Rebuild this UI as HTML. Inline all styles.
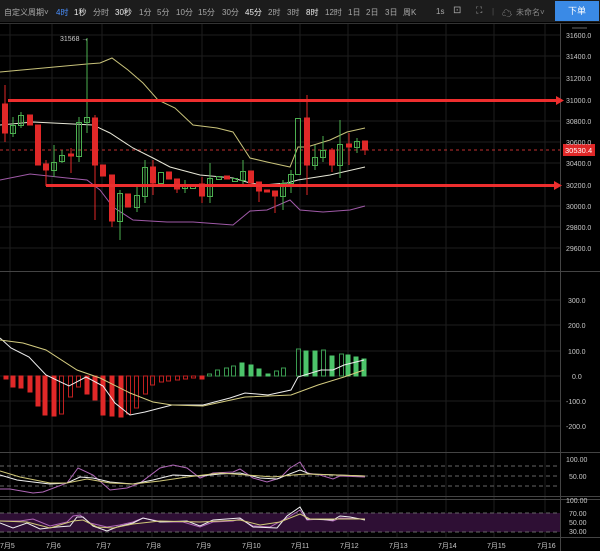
<!DOCTYPE html>
<html><head><meta charset="utf-8"><style>
html,body{margin:0;padding:0;background:#000;}
body{width:600px;height:551px;overflow:hidden;position:relative;font-family:"Liberation Sans","Noto Sans CJK SC",sans-serif;}
.tb{position:absolute;left:0;top:0;width:600px;height:22px;background:#1c1c1c;color:#a8a8a8;font-size:8px;}
.tb span{position:absolute;top:7px;white-space:nowrap;}
.btn{position:absolute;left:555px;top:1px;width:44px;height:20px;background:#3a8ae6;color:#fff;font-size:9px;text-align:center;line-height:20px;}
svg{position:absolute;left:0;top:0;}
</style></head><body>
<div class="tb">
<span style="left:4px">自定义周期˅</span>
<span style="left:56px;color:#4a90ff">4时</span>
<span style="left:74px;color:#eee">1秒</span>
<span style="left:93px">分时</span>
<span style="left:115px;color:#eee">30秒</span>
<span style="left:139px">1分</span>
<span style="left:157px">5分</span>
<span style="left:176px">10分</span>
<span style="left:198px">15分</span>
<span style="left:222px">30分</span>
<span style="left:245px;color:#eee">45分</span>
<span style="left:268px">2时</span>
<span style="left:287px">3时</span>
<span style="left:306px;color:#eee">8时</span>
<span style="left:325px">12时</span>
<span style="left:348px">1日</span>
<span style="left:366px">2日</span>
<span style="left:385px">3日</span>
<span style="left:403px">周K</span>
<span style="left:436px">1s</span>
<span style="left:453px;top:5px;font-size:10px">⊡</span>
<span style="left:476px;top:5px;font-size:9px">⛶</span>
<span style="left:492px;color:#555">|</span>
<span style="left:502px;top:5px;font-size:10px">☁</span>
<span style="left:516px;color:#888">未命名˅</span>
<div class="btn">下单</div>
</div>
<svg width="600" height="551" viewBox="0 0 600 551">
<g stroke="#1e1e1e" stroke-width="1">
<line x1="10" y1="24" x2="10" y2="537"/><line x1="52" y1="24" x2="52" y2="537"/><line x1="102" y1="24" x2="102" y2="537"/><line x1="152" y1="24" x2="152" y2="537"/><line x1="202" y1="24" x2="202" y2="537"/><line x1="251" y1="24" x2="251" y2="537"/><line x1="300" y1="24" x2="300" y2="537"/><line x1="348" y1="24" x2="348" y2="537"/><line x1="397" y1="24" x2="397" y2="537"/><line x1="446" y1="24" x2="446" y2="537"/><line x1="494" y1="24" x2="494" y2="537"/><line x1="545" y1="24" x2="545" y2="537"/>
<line x1="0" y1="35" x2="560" y2="35"/><line x1="0" y1="56" x2="560" y2="56"/><line x1="0" y1="78" x2="560" y2="78"/><line x1="0" y1="121" x2="560" y2="121"/><line x1="0" y1="142" x2="560" y2="142"/><line x1="0" y1="163" x2="560" y2="163"/><line x1="0" y1="206" x2="560" y2="206"/><line x1="0" y1="227" x2="560" y2="227"/><line x1="0" y1="248" x2="560" y2="248"/>
<line x1="0" y1="300" x2="560" y2="300"/><line x1="0" y1="325" x2="560" y2="325"/><line x1="0" y1="351" x2="560" y2="351"/><line x1="0" y1="376" x2="560" y2="376"/><line x1="0" y1="401" x2="560" y2="401"/><line x1="0" y1="426" x2="560" y2="426"/>
</g>
<g stroke="#444" stroke-width="1">
<line x1="0" y1="23.5" x2="600" y2="23.5" stroke="#333"/>
<line x1="560.5" y1="23" x2="560.5" y2="551"/>
<line x1="0" y1="271.5" x2="600" y2="271.5"/>
<line x1="0" y1="452.5" x2="600" y2="452.5"/>
<line x1="0" y1="496.5" x2="600" y2="496.5"/>
<line x1="0" y1="499.5" x2="600" y2="499.5"/>
<line x1="0" y1="537.5" x2="600" y2="537.5"/>
</g>
<rect x="0" y="513" width="560" height="19" fill="#2e0f34"/>
<g stroke="#666" stroke-dasharray="4,3" stroke-width="1">
<line x1="0" y1="466" x2="560" y2="466"/><line x1="0" y1="476" x2="560" y2="476"/><line x1="0" y1="486" x2="560" y2="486"/>
<line x1="0" y1="513" x2="560" y2="513"/><line x1="0" y1="532" x2="560" y2="532"/>
</g>
<line x1="0" y1="150" x2="560" y2="150" stroke="#c03030" stroke-dasharray="3,3"/>
<g fill="none" stroke-width="1">
<polyline stroke="#c8c27a" points="0,72 87,64 100,63 112,58 128,70 143,83 158,100 175,108 193,125 217,128 233,132 250,158 267,162 290,167 298,147 307,147 330,140 347,132 365,128"/>
<polyline stroke="#e8e8d8" points="0,125 33,122 93,125 110,133 133,148 153,158 170,167 200,175 233,178 250,183 263,185 287,183 298,180 330,175 365,167"/>
<polyline stroke="#a05aa8" points="0,180 30,174 67,178 87,180 100,190 113,207 133,220 167,222 193,222 233,225 250,211 267,210 290,200 300,210 323,212 350,210 365,206"/>
</g>
<g stroke="#e02828" fill="#e02828">
<line x1="5" y1="85" x2="5" y2="142"/><rect x="2.5" y="104" width="5" height="29"/>
<rect x="27.5" y="115" width="5" height="10"/>
<rect x="35.5" y="125" width="5" height="40"/>
<line x1="46" y1="160" x2="46" y2="186"/><rect x="43.5" y="164" width="5" height="6"/>
<line x1="71" y1="148" x2="71" y2="173"/><rect x="68.5" y="154" width="5" height="2"/>
<line x1="95" y1="115" x2="95" y2="220"/><rect x="92.5" y="118" width="5" height="47"/>
<rect x="100.5" y="165" width="5" height="11"/>
<line x1="112" y1="175" x2="112" y2="227"/><rect x="109.5" y="175" width="5" height="46"/>
<rect x="125.5" y="194" width="5" height="13"/>
<line x1="153" y1="160" x2="153" y2="195"/><rect x="150.5" y="167" width="5" height="16"/>
<rect x="166.5" y="172" width="5" height="7"/>
<line x1="177" y1="179" x2="177" y2="193"/><rect x="174.5" y="179" width="5" height="10"/>
<line x1="202" y1="177" x2="202" y2="203"/><rect x="199.5" y="184" width="5" height="12"/>
<rect x="224.5" y="176" width="5" height="3"/>
<rect x="248.5" y="171" width="5" height="12"/>
<line x1="259" y1="182" x2="259" y2="202"/><rect x="256.5" y="182" width="5" height="9"/>
<rect x="264.5" y="190" width="5" height="2"/>
<line x1="275" y1="191" x2="275" y2="213"/><rect x="272.5" y="191" width="5" height="5"/>
<line x1="307" y1="95" x2="307" y2="195"/><rect x="304.5" y="118" width="5" height="47"/>
<line x1="332" y1="148" x2="332" y2="172"/><rect x="329.5" y="150" width="5" height="15"/>
<line x1="349" y1="133" x2="349" y2="165"/><rect x="346.5" y="144" width="5" height="3"/>
<line x1="365" y1="141" x2="365" y2="155"/><rect x="362.5" y="141" width="5" height="9"/>
</g>
<g stroke="#4caf50" fill="none">
<line x1="13" y1="117" x2="13" y2="137"/><rect x="10.5" y="125.5" width="5" height="8"/>
<line x1="21" y1="112" x2="21" y2="128"/><rect x="18.5" y="115.5" width="5" height="10"/>
<line x1="54" y1="145" x2="54" y2="177"/><rect x="51.5" y="162.5" width="5" height="8"/>
<line x1="62" y1="150" x2="62" y2="163"/><rect x="59.5" y="155.5" width="5" height="6"/>
<line x1="79" y1="117" x2="79" y2="162"/><rect x="76.5" y="122.5" width="5" height="34"/>
<line x1="87" y1="38" x2="87" y2="133"/><rect x="84.5" y="117.5" width="5" height="5"/>
<line x1="120" y1="190" x2="120" y2="240"/><rect x="117.5" y="193.5" width="5" height="28"/>
<line x1="137" y1="185" x2="137" y2="212"/><rect x="134.5" y="195.5" width="5" height="12"/>
<line x1="145" y1="160" x2="145" y2="203"/><rect x="142.5" y="167.5" width="5" height="29"/>
<rect x="158.5" y="172.5" width="5" height="11"/>
<line x1="185" y1="180" x2="185" y2="193"/><rect x="182.5" y="186.5" width="5" height="2"/>
<rect x="190.5" y="186.5" width="5" height="2"/>
<line x1="210" y1="163" x2="210" y2="203"/><rect x="207.5" y="178.5" width="5" height="18"/>
<rect x="216.5" y="176.5" width="5" height="3"/>
<rect x="232.5" y="178.5" width="5" height="3"/>
<line x1="243" y1="160" x2="243" y2="187"/><rect x="240.5" y="171.5" width="5" height="9"/>
<line x1="283" y1="180" x2="283" y2="210"/><rect x="280.5" y="183.5" width="5" height="13"/>
<line x1="291" y1="170" x2="291" y2="193"/><rect x="288.5" y="174.5" width="5" height="9"/>
<rect x="295.5" y="118.5" width="5" height="56"/>
<line x1="315" y1="145" x2="315" y2="170"/><rect x="312.5" y="157.5" width="5" height="8"/>
<line x1="323" y1="136" x2="323" y2="162"/><rect x="320.5" y="150.5" width="5" height="7"/>
<line x1="340" y1="120" x2="340" y2="178"/><rect x="337.5" y="144.5" width="5" height="21"/>
<line x1="357" y1="138" x2="357" y2="153"/><rect x="354.5" y="141.5" width="5" height="6"/>
</g>
<text x="60" y="41" fill="#ccc" font-size="7">31568 →</text>
<g fill="#ee2e2e">
<rect x="8" y="99" width="548" height="3"/><polygon points="556,96 564,100.5 556,105"/>
<rect x="46" y="184" width="508" height="3"/><polygon points="554,181 562,185.5 554,190"/>
</g>
<rect x="563" y="144" width="32" height="12" fill="#e02828"/>
<text x="565" y="153" fill="#fff" font-size="7.5">30530.4</text>
<g fill="#e02828" stroke="#e02828">
<rect x="4" y="376" width="4" height="3"/><rect x="11" y="376" width="4" height="11"/><rect x="19" y="376" width="4" height="12"/><rect x="28" y="376" width="4" height="16"/><rect x="36" y="376" width="4" height="30"/><rect x="43" y="376" width="4" height="39"/><rect x="52" y="376" width="4" height="40"/>
<rect x="85" y="376" width="4" height="18"/><rect x="93" y="376" width="4" height="24"/><rect x="101" y="376" width="4" height="39"/><rect x="110" y="376" width="4" height="40"/><rect x="119" y="376" width="4" height="41"/><rect x="200" y="376" width="4" height="3"/>
</g>
<g fill="none" stroke="#c02020">
<rect x="59.5" y="376" width="4" height="38"/><rect x="68.5" y="376" width="4" height="21"/><rect x="76.5" y="376" width="4" height="11"/>
<rect x="126.5" y="376" width="4" height="38"/><rect x="134.5" y="376" width="4" height="32"/><rect x="143.5" y="376" width="4" height="18"/><rect x="150.5" y="376" width="4" height="9"/><rect x="159.5" y="376" width="4" height="6"/><rect x="166.5" y="376" width="4" height="5"/><rect x="175.5" y="376" width="4" height="4"/><rect x="183.5" y="376" width="4" height="3"/><rect x="191.5" y="376" width="4" height="2"/>
</g>
<g fill="#4cc46a" stroke="#4cc46a">
<rect x="240" y="363" width="4" height="13"/><rect x="249" y="365" width="4" height="11"/><rect x="257" y="369" width="4" height="7"/><rect x="266" y="374" width="4" height="2"/>
<rect x="304" y="351" width="4" height="25"/><rect x="313" y="351" width="4" height="25"/><rect x="330" y="356" width="4" height="20"/><rect x="346" y="355" width="4" height="21"/><rect x="354" y="357" width="4" height="19"/><rect x="362" y="359" width="4" height="17"/>
</g>
<g fill="none" stroke="#3a9a50">
<rect x="207.5" y="374" width="4" height="2"/><rect x="215.5" y="370" width="4" height="6"/><rect x="224.5" y="368" width="4" height="8"/><rect x="231.5" y="366" width="4" height="10"/>
<rect x="274.5" y="371" width="4" height="5"/><rect x="281.5" y="368" width="4" height="8"/><rect x="296.5" y="349" width="4" height="27"/><rect x="321.5" y="350" width="4" height="26"/><rect x="339.5" y="354" width="4" height="22"/>
</g>
<g fill="none" stroke-width="1">
<polyline stroke="#eee" points="0,338 11,348 29,357 46,375 69,386 86,377 103,386 115,403 130,415 145,412 172,405 203,405 230,398 245,393 268,395 291,390 298,377 321,370 333,370 344,365 364,360"/>
<polyline stroke="#d4cc80" points="0,340 23,343 46,350 77,370 100,378 130,393 153,402 172,405 203,406 245,397 291,395 318,385 344,377 364,370"/>
</g>
<g fill="none" stroke-width="1">
<polyline stroke="#b068b8" points="0,489 10,489 33,493 43,492 67,483 78,468 93,475 110,490 127,488 140,483 160,468 173,465 187,468 200,478 213,473 233,472 240,469 253,478 267,482 280,478 290,468 300,462 307,473 320,475 333,479 340,476 365,477"/>
<polyline stroke="#f0f0f0" points="0,475 17,480 33,482 50,484 67,483 80,477 93,478 110,482 133,484 153,480 173,475 200,476 220,474 240,473 260,478 277,479 287,475 300,470 310,474 365,476"/>
<polyline stroke="#d0c878" points="0,471 20,477 50,483 67,483 87,479 110,483 133,484 160,481 187,477 220,473 247,475 273,477 293,475 307,474 365,476"/>
<polyline stroke="#b068b8" points="0,521 20,521 33,519 50,526 67,522 73,516 80,515 90,523 107,527 120,525 133,522 143,518 163,522 183,522 200,527 213,522 233,521 240,519 253,526 270,527 287,518 300,510 307,520 320,519 333,521 340,518 365,519"/>
<polyline stroke="#f0f0f0" points="0,523 13,528 27,523 40,529 57,527 70,526 77,517 83,517 93,526 107,531 117,527 133,523 143,518 160,522 187,521 200,526 213,520 240,518 253,527 277,528 287,516 300,507 307,519 333,520 340,516 350,517 365,520"/>
<polyline stroke="#d0c878" points="0,521 27,522 50,528 73,521 83,520 97,527 113,528 133,524 160,521 200,522 240,520 260,525 280,522 300,514 310,519 365,519"/>
</g>
<g fill="#c8c8c8" font-size="7">
<text x="566" y="38">31600.0</text><text x="566" y="59">31400.0</text><text x="566" y="81">31200.0</text><text x="566" y="103">31000.0</text><text x="566" y="124">30800.0</text><text x="566" y="145">30600.0</text><text x="566" y="166">30400.0</text><text x="566" y="188">30200.0</text><text x="566" y="209">30000.0</text><text x="566" y="230">29800.0</text><text x="566" y="251">29600.0</text>
<text x="568" y="303">300.0</text><text x="568" y="328">200.0</text><text x="568" y="354">100.0</text><text x="572" y="379">0.0</text><text x="566" y="404">-100.0</text><text x="566" y="429">-200.0</text>
<text x="566" y="462">100.00</text><text x="569" y="479">50.00</text>
<text x="566" y="503">100.00</text><text x="569" y="516">70.00</text><text x="569" y="525">50.00</text><text x="569" y="534">30.00</text>
</g>
<g fill="#c8c8c8" font-size="7">
<text x="0" y="548">7月5</text><text x="46" y="548">7月6</text><text x="96" y="548">7月7</text><text x="146" y="548">7月8</text><text x="196" y="548">7月9</text><text x="242" y="548">7月10</text><text x="291" y="548">7月11</text><text x="340" y="548">7月12</text><text x="389" y="548">7月13</text><text x="438" y="548">7月14</text><text x="487" y="548">7月15</text><text x="537" y="548">7月16</text>
</g>
<path d="M572 28 L587 28" stroke="#666" fill="none"/>
</svg>
</body></html>
